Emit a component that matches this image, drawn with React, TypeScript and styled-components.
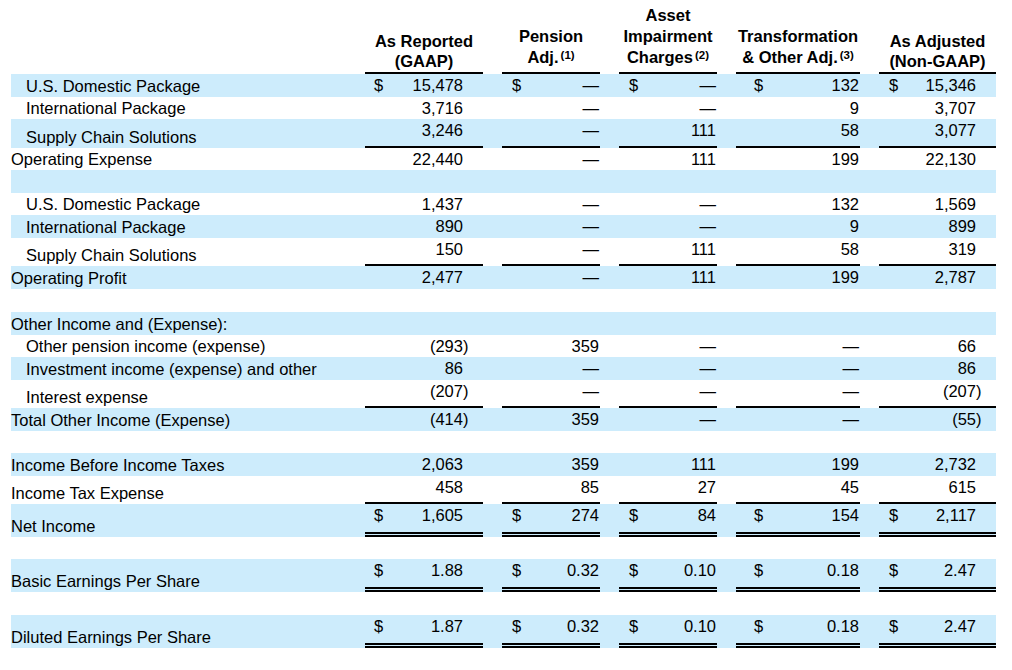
import React from 'react';
import styled, { createGlobalStyle } from 'styled-components';

const GlobalStyle = createGlobalStyle`
  html, body { margin: 0; padding: 0; background: #ffffff; }
  body { font-family: "Liberation Sans", Arial, sans-serif; color: #000000; }
`;

const COLS = '335px 118px 98px 98px 124px 117px';
const BLUE = '#cdecfc';

const Page = styled.div`
  width: 1012px;
  height: 670px;
  padding-left: 11px;
  box-sizing: border-box;
  font-size: 16.5px;
  overflow: hidden;
`;

const Table = styled.div`
  width: 985px;
  display: flex;
  flex-direction: column;
`;

const HeaderRow = styled.div`
  display: grid;
  grid-template-columns: ${COLS};
  column-gap: 19px;
  height: 74px;
  align-items: end;
`;

const HeadCell = styled.div<{ $lh: number; $pb: number }>`
  border-bottom: 2px solid #000;
  text-align: center;
  font-weight: 700;
  line-height: ${(p) => p.$lh}px;
  padding-bottom: ${(p) => p.$pb}px;
  white-space: nowrap;
`;

const Sup = styled.span`
  font-size: 11.5px;
  vertical-align: 4px;
  line-height: 0;
  margin-left: 2px;
`;

const Row = styled.div<{ $h: number; $blue: boolean }>`
  display: grid;
  grid-template-columns: ${COLS};
  column-gap: 19px;
  height: ${(p) => p.$h}px;
  background: ${(p) => (p.$blue ? BLUE : '#ffffff')};
  line-height: 22px;
`;

const Label = styled.div<{ $indent: boolean }>`
  align-self: end;
  padding-left: ${(p) => (p.$indent ? 15 : 0)}px;
  white-space: nowrap;
`;

type Rule = 'none' | 'single' | 'double';

const Cell = styled.div<{ $pl: number; $pr: number; $rule: Rule }>`
  display: flex;
  justify-content: space-between;
  align-items: flex-start;
  padding: 0 ${(p) => p.$pr}px 0 ${(p) => p.$pl}px;
  border-bottom: ${(p) =>
    p.$rule === 'single' ? '2px solid #000' : p.$rule === 'double' ? '5px double #000' : 'none'};
  white-space: nowrap;
`;

const Num = styled.span<{ $neg: boolean }>`
  margin-left: auto;
  margin-right: ${(p) => (p.$neg ? '-0.333em' : '0')};
`;

const Dollar = styled.span``;

const PAD: [number, number][] = [
  [9, 20],
  [10, 1],
  [10, 1],
  [18, 1],
  [10, 20],
];

type RowData = {
  label?: string;
  indent?: boolean;
  h: number;
  rule?: Rule;
  dollar?: boolean;
  vals?: string[];
};

const rows: RowData[] = [
  { label: 'U.S. Domestic Package', indent: true, h: 23, dollar: true, vals: ['15,478', '—', '—', '132', '15,346'] },
  { label: 'International Package', indent: true, h: 22, vals: ['3,716', '—', '—', '9', '3,707'] },
  { label: 'Supply Chain Solutions', indent: true, h: 29, rule: 'single', vals: ['3,246', '—', '111', '58', '3,077'] },
  { label: 'Operating Expense', h: 22, vals: ['22,440', '—', '111', '199', '22,130'] },
  { h: 23 },
  { label: 'U.S. Domestic Package', indent: true, h: 22, vals: ['1,437', '—', '—', '132', '1,569'] },
  { label: 'International Package', indent: true, h: 23, vals: ['890', '—', '—', '9', '899'] },
  { label: 'Supply Chain Solutions', indent: true, h: 28, rule: 'single', vals: ['150', '—', '111', '58', '319'] },
  { label: 'Operating Profit', h: 23, vals: ['2,477', '—', '111', '199', '2,787'] },
  { h: 23 },
  { label: 'Other Income and (Expense):', h: 23 },
  { label: 'Other pension income (expense)', indent: true, h: 22, vals: ['(293)', '359', '—', '—', '66'] },
  { label: 'Investment income (expense) and other', indent: true, h: 23, vals: ['86', '—', '—', '—', '86'] },
  { label: 'Interest expense', indent: true, h: 28, rule: 'single', vals: ['(207)', '—', '—', '—', '(207)'] },
  { label: 'Total Other Income (Expense)', h: 23, vals: ['(414)', '359', '—', '—', '(55)'] },
  { h: 22 },
  { label: 'Income Before Income Taxes', h: 23, vals: ['2,063', '359', '111', '199', '2,732'] },
  { label: 'Income Tax Expense', h: 28, rule: 'single', vals: ['458', '85', '27', '45', '615'] },
  { label: 'Net Income', h: 33, rule: 'double', dollar: true, vals: ['1,605', '274', '84', '154', '2,117'] },
  { h: 22 },
  { label: 'Basic Earnings Per Share', h: 33, rule: 'double', dollar: true, vals: ['1.88', '0.32', '0.10', '0.18', '2.47'] },
  { h: 23 },
  { label: 'Diluted Earnings Per Share', h: 33, rule: 'double', dollar: true, vals: ['1.87', '0.32', '0.10', '0.18', '2.47'] },
];

const Header: React.FC = () => (
  <HeaderRow>
    <div />
    <HeadCell $lh={20} $pb={1}>
      As Reported
      <br />
      (GAAP)
    </HeadCell>
    <HeadCell $lh={21} $pb={4}>
      Pension
      <br />
      Adj.<Sup>(1)</Sup>
    </HeadCell>
    <HeadCell $lh={21} $pb={4}>
      Asset
      <br />
      Impairment
      <br />
      Charges<Sup>(2)</Sup>
    </HeadCell>
    <HeadCell $lh={21} $pb={4}>
      Transformation
      <br />
      &amp; Other Adj.<Sup>(3)</Sup>
    </HeadCell>
    <HeadCell $lh={20} $pb={1}>
      As Adjusted
      <br />
      (Non-GAAP)
    </HeadCell>
  </HeaderRow>
);

export default function App() {
  return (
    <>
      <GlobalStyle />
      <Page>
        <Table>
          <Header />
          {rows.map((r, i) => (
            <Row key={i} $h={r.h} $blue={i % 2 === 0}>
              <Label $indent={!!r.indent}>{r.label ?? ''}</Label>
              {r.vals
                ? r.vals.map((v, j) => (
                    <Cell key={j} $pl={PAD[j][0]} $pr={PAD[j][1]} $rule={r.rule ?? 'none'}>
                      {r.dollar ? <Dollar>$</Dollar> : null}
                      <Num $neg={v.startsWith('(')}>{v}</Num>
                    </Cell>
                  ))
                : null}
            </Row>
          ))}
        </Table>
      </Page>
    </>
  );
}
